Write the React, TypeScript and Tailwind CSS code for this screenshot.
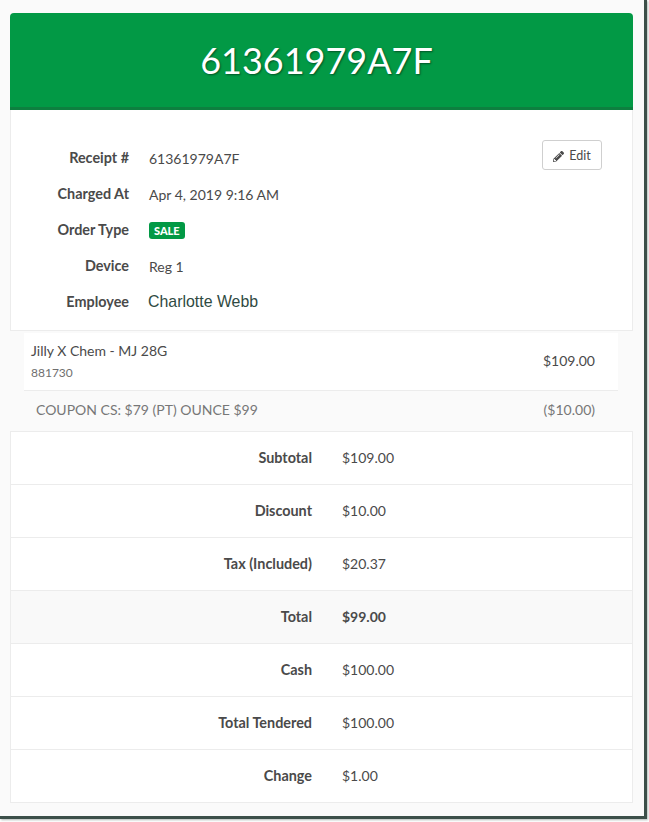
import type { ReactNode } from "react";
import { FaPencilAlt } from "react-icons/fa";

const details = [
  { label: "Receipt #", value: "61361979A7F" },
  { label: "Charged At", value: "Apr 4, 2019 9:16 AM" },
];

const totals = [
  { label: "Subtotal", value: "$109.00" },
  { label: "Discount", value: "$10.00" },
  { label: "Tax (Included)", value: "$20.37" },
  { label: "Total", value: "$99.00", strong: true },
  { label: "Cash", value: "$100.00" },
  { label: "Total Tendered", value: "$100.00" },
  { label: "Change", value: "$1.00" },
];

function DetailRow({ label, children }: { label: string; children: ReactNode }) {
  return (
    <div className="flex h-[36px] items-center">
      <div className="w-[118px] text-right text-[14.4px] font-bold text-[#4a4a4a]">{label}</div>
      <div className="ml-[20px] text-[14px] text-[#4a4a4a]">{children}</div>
    </div>
  );
}

export default function App() {
  return (
    <div className="h-[822px] w-[649px] overflow-hidden bg-white font-['Lato',sans-serif]">
      {/* Window with its dark edge */}
      <div className="h-[819px] w-[647px] border-r-[3px] border-b-[3px] border-[#3c4f49] bg-[#fafafa] pt-[13px] pl-[10px] shadow-[1px_1px_2px_rgba(60,79,73,0.4)]">
        <div className="w-[623px]">
          {/* Header */}
          <div className="flex h-[97px] items-center justify-center rounded-t border-b-[3px] border-[#0d7f3f] bg-[#029945] pr-[10px]">
            <h1 className="text-[36px] font-normal text-white [text-shadow:1px_1px_2px_rgba(0,0,0,0.45)]">61361979A7F</h1>
          </div>

          {/* Receipt details */}
          <div className="flex h-[221px] items-start justify-between border-r border-b border-l border-[#ececec] bg-white pt-[30px] pr-[30px]">
            <div>
              {details.map((d) => (
                <DetailRow key={d.label} label={d.label}>{d.value}</DetailRow>
              ))}
              <DetailRow label="Order Type">
                <span className="block rounded-[3px] bg-[#029945] px-[5px] py-[2px] text-[11px] leading-[13px] font-black text-white">SALE</span>
              </DetailRow>
              <DetailRow label="Device">Reg 1</DetailRow>
              <DetailRow label="Employee">
                <span className="-ml-[1px] font-['Liberation_Sans',sans-serif] text-[15.9px] text-[#2f4a42]">Charlotte Webb</span>
              </DetailRow>
            </div>
            <button type="button" className="flex h-[30px] w-[60px] items-center justify-center gap-[5px] rounded-[3px] border border-[#cfcfcf] bg-white pt-[2px] text-[12.5px] text-[#4a4a4a]">
              <FaPencilAlt className="h-[11px] w-[11px]" />
              Edit
            </button>
          </div>

          {/* Line item */}
          <div className="mt-[2px] mr-[15px] ml-[14px] flex h-[58px] items-center justify-between border-b border-[#ececec] bg-white pr-[23px] pb-[2px] pl-[7px]">
            <div className="pt-[2px]">
              <div className="text-[14px] leading-[20px] text-[#4a4a4a]">Jilly X Chem - MJ 28G</div>
              <div className="mt-[3px] text-[12px] leading-[18px] text-[#6f6f6f]">881730</div>
            </div>
            <div className="text-[14px] text-[#4a4a4a]">$109.00</div>
          </div>
          <div className="mr-[15px] ml-[14px] flex h-[40px] items-center justify-between pr-[23px] pb-[3px] pl-[12px] text-[14px] text-[#777777]">
            <span>COUPON CS: $79 (PT) OUNCE $99</span>
            <span>($10.00)</span>
          </div>

          {/* Totals */}
          <div className="border border-[#ececec] bg-white">
            {totals.map((t) => (
              <div key={t.label} className={`flex h-[53px] items-center border-b border-[#ececec] pb-[1px] last:h-[52px] last:border-b-0 ${t.strong ? "bg-[#f9f9f9]" : ""}`}>
                <div className="w-[301px] text-right text-[14.4px] font-bold text-[#4a4a4a]">{t.label}</div>
                <div className={`ml-[30px] text-[14px] text-[#4a4a4a] ${t.strong ? "font-bold" : ""}`}>{t.value}</div>
              </div>
            ))}
          </div>
        </div>
      </div>
    </div>
  );
}
